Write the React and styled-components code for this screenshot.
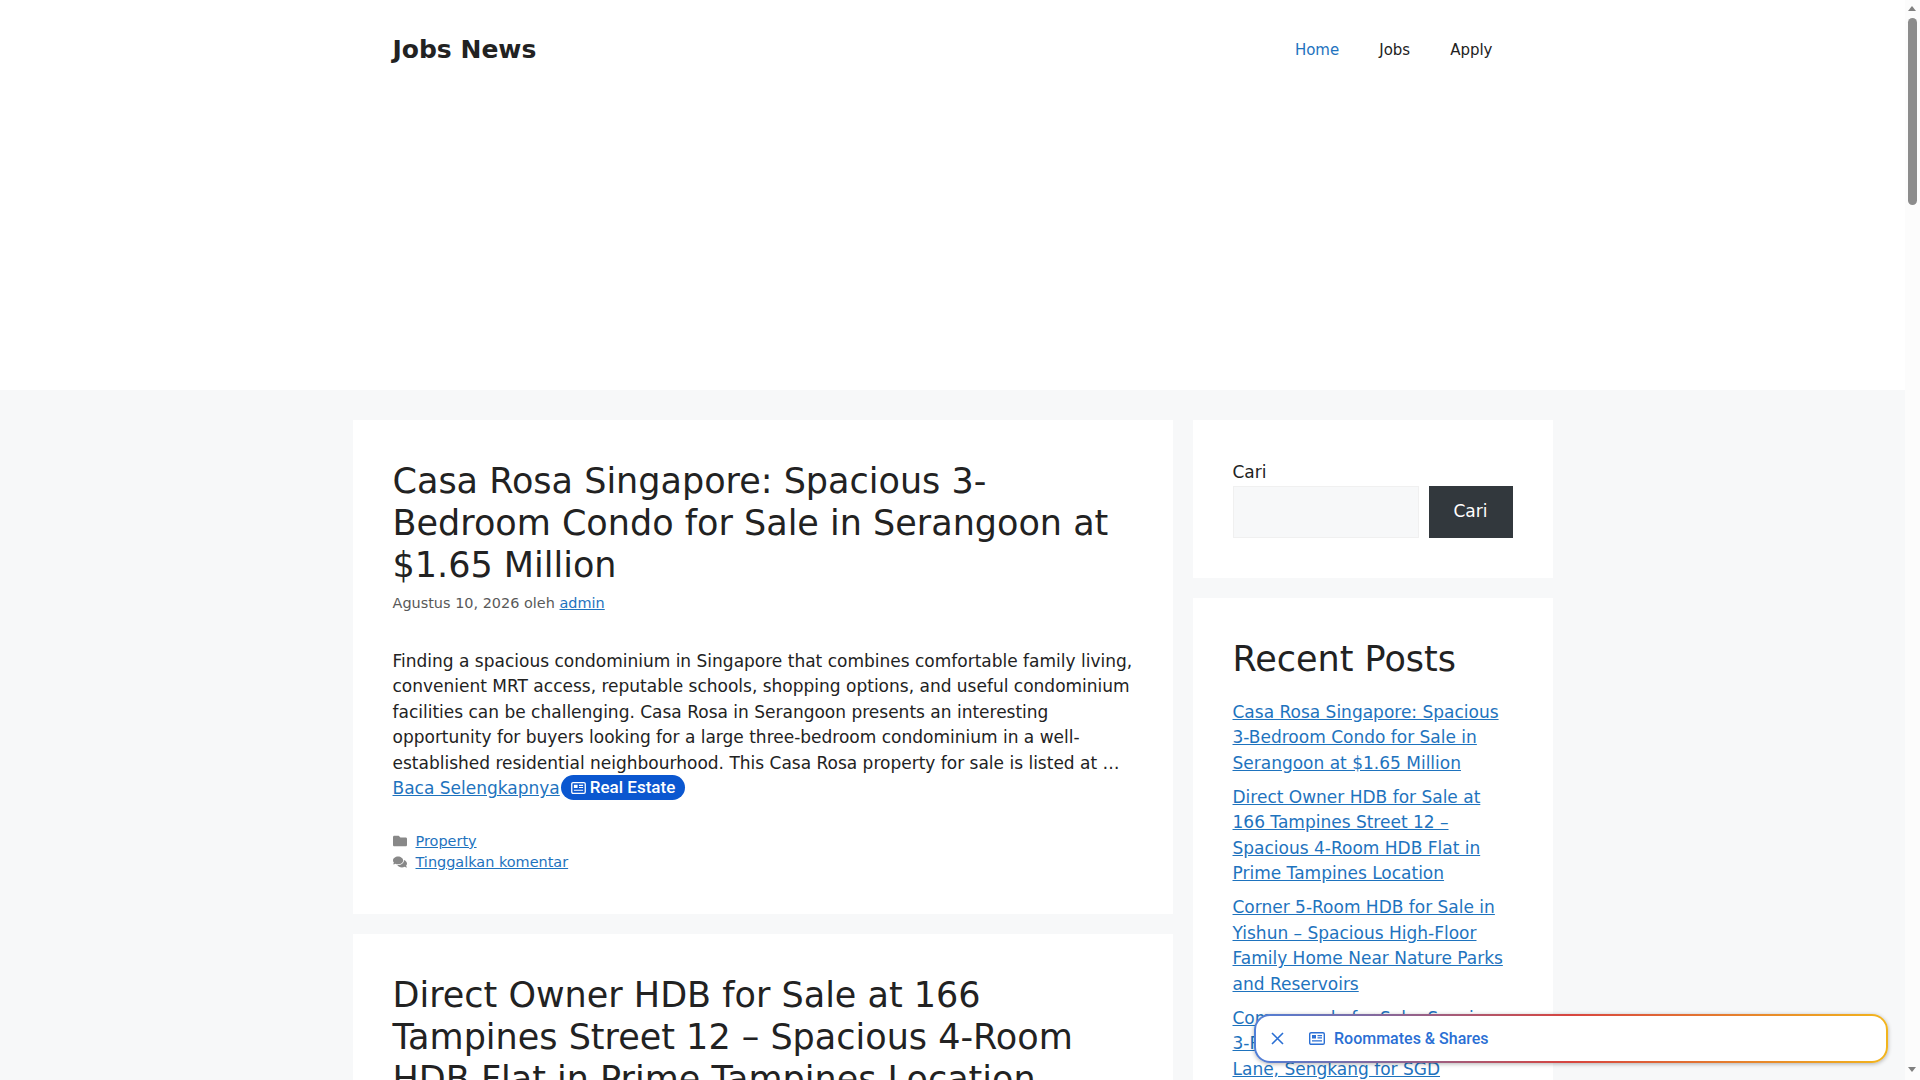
import React from 'react';
import styled, { createGlobalStyle } from 'styled-components';

const GlobalStyle = createGlobalStyle`
  html, body {
    margin: 0;
    padding: 0;
  }

  body {
    background: #f7f8f9;
    color: #222;
    font-family: "DejaVu Sans", sans-serif;
    font-size: 17px;
    line-height: 1.5;
  }

  #root {
    width: 1905px;
  }

  a {
    color: #1e73be;
  }
`;

const Header = styled.header`
  background: #fff;
  height: 390px;
`;

const HeaderInner = styled.div`
  width: 1200px;
  margin: 0 auto;
  padding: 0 40px;
  box-sizing: border-box;
  height: 100px;
  display: flex;
  align-items: center;
  justify-content: space-between;
`;

const SiteTitle = styled.div`
  font-size: 25px;
  font-weight: 700;
  line-height: 1.5;
  color: #222;
`;

const Nav = styled.nav`
  display: flex;
`;

const NavLink = styled.span`
  font-size: 15px;
  padding: 0 20px;
  line-height: 60px;
  color: ${props => (props.active ? '#1e73be' : '#222')};
`;

const Container = styled.div`
  width: 1200px;
  margin: 30px auto 0;
  display: flex;
  gap: 20px;
  align-items: flex-start;
`;

const Main = styled.main`
  width: 820px;
  display: flex;
  flex-direction: column;
  gap: 20px;
`;

const Sidebar = styled.aside`
  width: 360px;
  display: flex;
  flex-direction: column;
  gap: 20px;
`;

const Card = styled.div`
  background: #fff;
  padding: 40px;
`;

const PostTitle = styled.h2`
  font-size: 35px;
  font-weight: 400;
  line-height: 1.2;
  margin: 0;
`;

const Meta = styled.div`
  font-size: 14.45px;
  line-height: 1.5;
  color: #595959;
  margin-top: 7px;
`;

const Summary = styled.p`
  margin: 34px 0 0;
`;

const Pill = styled.span`
  display: inline-flex;
  align-items: center;
  gap: 4px;
  vertical-align: middle;
  height: 25px;
  margin-left: 1px;
  margin-top: -3px;
  padding: 0 10px;
  border-radius: 13px;
  background: #0b57d0;
  color: #fff;
  font-family: Roboto, sans-serif;
  font-size: 17px;
  font-weight: 500;
  line-height: 1;
`;

const FooterMeta = styled.div`
  margin-top: 29px;
  margin-bottom: 1px;
  font-size: 14.45px;
  line-height: 21px;
`;

const FooterRow = styled.div`
  display: flex;
  align-items: center;
  gap: 9px;
`;

const SearchLabel = styled.div`
  line-height: 25px;
  margin-bottom: 1px;
`;

const SearchRow = styled.div`
  display: flex;
  gap: 10px;
`;

const SearchInput = styled.div`
  width: 186px;
  height: 52px;
  box-sizing: border-box;
  background: #f7f8f9;
  border: 1px solid #f0f0f0;
`;

const SearchButton = styled.div`
  width: 84px;
  height: 52px;
  background: #32383d;
  color: #fff;
  display: flex;
  align-items: center;
  justify-content: center;
`;

const WidgetTitle = styled.h2`
  font-size: 35px;
  font-weight: 400;
  line-height: 1.2;
  margin: 0 0 19.7px;
`;

const RecentList = styled.ul`
  list-style: none;
  margin: 0;
  padding: 0;
`;

const RecentItem = styled.li`
  margin-bottom: 8.5px;
`;

const FloatingWrap = styled.div`
  position: fixed;
  left: 1254px;
  top: 1014px;
  width: 634px;
  height: 49px;
  padding: 2px;
  box-sizing: border-box;
  border-radius: 16px;
  background: linear-gradient(90deg, #4f7fd8 0%, #d8453f 50%, #f2b51d 100%);
  box-shadow: 0 1px 4px rgba(0, 0, 0, 0.3);
`;

const FloatingInner = styled.div`
  height: 100%;
  background: #fff;
  border-radius: 14px;
  display: flex;
  align-items: center;
  padding-left: 15px;
  color: #2a6fd4;
  font-family: Roboto, sans-serif;
  font-size: 16px;
  font-weight: 500;
`;

const CloseButton = styled.svg`
  margin-right: 25px;
`;

const ChipLabel = styled.span`
  margin-left: 9px;
`;

const ScrollTrack = styled.div`
  position: fixed;
  top: 0;
  right: 0;
  bottom: 0;
  width: 15px;
  background: #fcfcfc;
`;

const ScrollThumb = styled.div`
  position: absolute;
  top: 18px;
  left: 3px;
  width: 9px;
  height: 187px;
  border-radius: 5px;
  background: #8c8c8c;
`;

const ScrollArrow = styled.div`
  position: absolute;
  left: 3px;
  ${props => (props.down ? 'bottom: 8px;' : 'top: 6px;')}
  border-left: 4.5px solid transparent;
  border-right: 4.5px solid transparent;
  ${props => (props.down ? 'border-top' : 'border-bottom')}: 5px solid #808080;
`;

const Spacer = styled.div`
  height: 4460px;
`;

const Folder = () => (
  <svg width="14" height="14" viewBox="0 0 512 512" fill="#888">
    <path d="M464 128H272l-64-64H48C21.500 64 0 85.500 0 112v288c0 26.500 21.500 48 48 48h416c26.500 0 48-21.500 48-48V176c0-26.500-21.500-48-48-48z" />
  </svg>
);

const Comments = () => (
  <svg width="14" height="14" viewBox="0 0 576 512" fill="#888">
    <path d="M416 192c0-88.400-93.100-160-208-160S0 103.600 0 192c0 34.300 14.100 65.900 38 92-13.400 30.200-35.500 54.200-35.800 54.500-2.200 2.300-2.800 5.700-1.500 8.700S4.800 352 8 352c36.600 0 66.900-12.300 88.700-25 32.200 15.700 70.300 25 111.300 25 114.900 0 208-71.600 208-160zm122 220c23.900-26 38-57.700 38-92 0-66.900-53.500-124.200-129.300-148.100.9 6.600 1.300 13.300 1.300 20.100 0 105.900-107.700 192-240 192-10.800 0-21.300-.8-31.700-1.900C207.800 439.600 281.800 480 368 480c41 0 79.100-9.200 111.300-25 21.800 12.700 52.100 25 88.700 25 3.200 0 6.100-1.900 7.300-4.800 1.300-2.900.7-6.300-1.500-8.700-.3-.3-22.400-24.200-35.800-54.500z" />
  </svg>
);

const NewsIcon = ({ width, height }) => (
  <svg width={width} height={height} viewBox="0 0 16 13" fill="none">
    <rect x="0.7" y="0.7" width="14.6" height="11.6" rx="1.4" stroke="currentColor" strokeWidth="1.4" />
    <rect x="3" y="3" width="4" height="3.5" fill="currentColor" />
    <path d="M8.500 3.700H13M8.500 5.900H13M3 8.900H13" stroke="currentColor" strokeWidth="1.200" />
  </svg>
);

const recentPosts = [
  'Casa Rosa Singapore: Spacious 3-Bedroom Condo for Sale in Serangoon at $1.65 Million',
  'Direct Owner HDB for Sale at 166 Tampines Street 12 – Spacious 4-Room HDB Flat in Prime Tampines Location',
  'Corner 5-Room HDB for Sale in Yishun – Spacious High-Floor Family Home Near Nature Parks and Reservoirs',
  'Compassvale for Sale: Spacious 3-Room HDB at Compassvale Lane, Sengkang for SGD 550,000',
];

const App = () => (
  <>
    <GlobalStyle />
    <Header>
      <HeaderInner>
        <SiteTitle>Jobs News</SiteTitle>
        <Nav>
          <NavLink active>Home</NavLink>
          <NavLink>Jobs</NavLink>
          <NavLink>Apply</NavLink>
        </Nav>
      </HeaderInner>
    </Header>
    <Container>
      <Main>
        <Card>
          <PostTitle>Casa Rosa Singapore: Spacious 3-Bedroom Condo for Sale in Serangoon at $1.65 Million</PostTitle>
          <Meta>Agustus 10, 2026 oleh <a href="#a">admin</a></Meta>
          <Summary>
            Finding a spacious condominium in Singapore that combines comfortable family living, convenient MRT access, reputable schools, shopping options, and useful condominium facilities can be challenging. Casa Rosa in Serangoon presents an interesting opportunity for buyers looking for a large three-bedroom condominium in a well-established residential neighbourhood. This Casa Rosa property for sale is listed at … <a href="#a">Baca Selengkapnya</a>
            <Pill><NewsIcon width={15} height={12} />Real Estate</Pill>
          </Summary>
          <FooterMeta>
            <FooterRow><Folder /><a href="#a">Property</a></FooterRow>
            <FooterRow><Comments /><a href="#a">Tinggalkan komentar</a></FooterRow>
          </FooterMeta>
        </Card>
        <Card>
          <PostTitle>Direct Owner HDB for Sale at 166 Tampines Street 12 – Spacious 4-Room HDB Flat in Prime Tampines Location</PostTitle>
          <Spacer />
        </Card>
      </Main>
      <Sidebar>
        <Card>
          <SearchLabel>Cari</SearchLabel>
          <SearchRow>
            <SearchInput />
            <SearchButton>Cari</SearchButton>
          </SearchRow>
        </Card>
        <Card>
          <WidgetTitle>Recent Posts</WidgetTitle>
          <RecentList>
            {recentPosts.map(title => (
              <RecentItem key={title}><a href="#a">{title}</a></RecentItem>
            ))}
          </RecentList>
        </Card>
      </Sidebar>
    </Container>
    <FloatingWrap>
      <FloatingInner>
        <CloseButton width="13" height="13" viewBox="0 0 13 13" fill="none">
          <path d="M1 1L12 12M12 1L1 12" stroke="currentColor" strokeWidth="1.6" />
        </CloseButton>
        <NewsIcon width={16} height={13} />
        <ChipLabel>Roommates &amp; Shares</ChipLabel>
      </FloatingInner>
    </FloatingWrap>
    <ScrollTrack>
      <ScrollArrow />
      <ScrollThumb />
      <ScrollArrow down />
    </ScrollTrack>
  </>
);

export default App;
